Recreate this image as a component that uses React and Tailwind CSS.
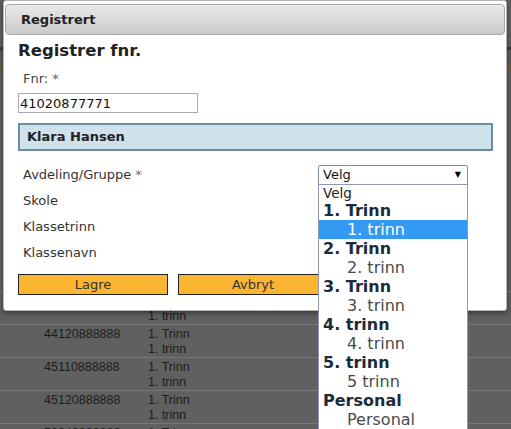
import { useState } from 'react'

const groups = [
  { label: '1. Trinn', options: ['1. trinn'] },
  { label: '2. Trinn', options: ['2. trinn'] },
  { label: '3. Trinn', options: ['3. trinn'] },
  { label: '4. trinn', options: ['4. trinn'] },
  { label: '5. trinn', options: ['5 trinn'] },
  { label: 'Personal', options: ['Personal'] },
]

const rows = [
  { fnr: '43120888888', trinn: '1. Trinn', klasse: '1. trinn' },
  { fnr: '44120888888', trinn: '1. Trinn', klasse: '1. trinn' },
  { fnr: '45110888888', trinn: '1. Trinn', klasse: '1. trinn' },
  { fnr: '45120888888', trinn: '1. Trinn', klasse: '1. trinn' },
  { fnr: '50040888888', trinn: '1. Trinn', klasse: '1. trinn' },
]

const Cursor = () => (
  <svg width="13" height="20" viewBox="0 0 13 20" className="absolute left-[455px] top-[226px]">
    <path
      d="M0.5 0.5 L0.5 16 L4.2 12.6 L7 18.8 L9.4 17.8 L6.7 11.7 L11.5 11.7 Z"
      fill="#fff"
      stroke="#000"
      strokeWidth="1"
      strokeLinejoin="round"
    />
  </svg>
)

const App = () => {
  const [fnr] = useState('41020877771')
  const [selected] = useState('1. trinn')

  return (
    <div className="relative w-[511px] h-[429px] overflow-hidden bg-[#606060] font-['DejaVu_Sans',sans-serif]">
      {/* page behind the overlay */}
      <div className="h-[291px] flex flex-col">
        <div className="h-[47px]" />
        <div className="h-[3px] bg-[#3a3a3a]" />
        <div className="h-[16px] bg-[#5c5c5c]" />
        <div className="h-[3px] bg-[#6d5f3a]" />
      </div>
      <div className="font-['Liberation_Sans',Arial,sans-serif] text-[12.5px] text-[#1c1c1c]">
        {rows.map((row) => (
          <div key={row.fnr} className="flex border-t border-[#787878] pt-[2px] h-[33px]">
            <div className="w-[148px] pl-[44px] leading-[15px]">{row.fnr}</div>
            <div className="leading-[15px]">
              <div>{row.trinn}</div>
              <div>{row.klasse}</div>
            </div>
          </div>
        ))}
      </div>

      {/* dialog */}
      <div className="absolute left-[3px] top-0 w-[504px] h-[311px] bg-white border border-[#b5b5b5] rounded-[3px] shadow-[0_2px_5px_rgba(0,0,0,0.45)] flex flex-col">
        <div className="mx-[1px] mt-[3px] h-[31px] rounded-[4px] border border-[#a8a8a8] bg-gradient-to-b from-[#e9e9e9] to-[#cbcbcb] flex items-center px-[15px]">
          <span className="text-[13px] font-bold text-[#222]">Registrert</span>
        </div>

        <div className="px-[14px] flex flex-col">
          <h1 className="mt-[6px] text-[16.5px] font-bold text-[#222] leading-[20px]">Registrer fnr.</h1>
          <div className="mt-[10px] pl-[5px] text-[13px] text-[#444] leading-[16px]">
            Fnr: <span className="text-[#666]">*</span>
          </div>
          <input
            value={fnr}
            readOnly
            className="mt-[6px] w-[180px] h-[20px] border border-[#a9a9a9] px-[1px] text-[13px] text-[#111] outline-none"
          />

          <div className="mt-[10px] w-[475px] h-[28px] bg-[#cfe1eb] border-2 border-[#6b8ca1] flex items-center px-[7px]">
            <span className="text-[13px] font-bold text-[#222]">Klara Hansen</span>
          </div>

          <div className="mt-[11px] grid grid-cols-[300px_150px] text-[13px] text-[#333]">
            <div className="h-[26px] flex items-center pl-[5px]">
              Avdeling/Gruppe <span className="ml-[4px] text-[#777]">*</span>
            </div>
            <div className="relative h-[26px] flex items-center">
              <div className="w-[150px] h-[21px] border border-[#7f8fa9] rounded-[2px] bg-white flex items-center justify-between pl-[4px] pr-[6px]">
                <span className="text-[13px] text-[#111]">Velg</span>
                <span className="text-[8px] text-black">▼</span>
              </div>
              <div className="absolute left-0 top-[22px] w-[150px] bg-white border border-[#8c9bb3] flex flex-col z-10">
                <div className="h-[16px] flex items-center pl-[4px] text-[13.5px] text-[#222]">Velg</div>
                {groups.map((g) => (
                  <div key={g.label} className="flex flex-col">
                    <div className="h-[19px] flex items-center pl-[4px] text-[16px] font-bold text-[#1c2b3b]">
                      {g.label}
                    </div>
                    {g.options.map((o) => (
                      <div
                        key={o}
                        className={
                          o === selected
                            ? 'h-[19px] flex items-center pl-[28px] text-[16px] bg-[#3399f3] text-white'
                            : 'h-[19px] flex items-center pl-[28px] text-[16px] text-[#4a4a4a]'
                        }
                      >
                        {o}
                      </div>
                    ))}
                  </div>
                ))}
              </div>
            </div>
            <div className="h-[26px] flex items-center pl-[5px]">Skole</div>
            <div />
            <div className="h-[26px] flex items-center pl-[5px]">Klassetrinn</div>
            <div />
            <div className="h-[26px] flex items-center pl-[5px]">Klassenavn</div>
            <div />
          </div>

          <div className="mt-[8px] flex gap-[10px]">
            <button className="w-[150px] h-[21px] bg-[#fbb531] border border-[#222] text-[13px] text-[#333] leading-none">
              Lagre
            </button>
            <button className="w-[150px] h-[21px] bg-[#fbb531] border border-[#222] text-[13px] text-[#333] leading-none">
              Avbryt
            </button>
          </div>
        </div>
      </div>

      <Cursor />
    </div>
  )
}

export default App
